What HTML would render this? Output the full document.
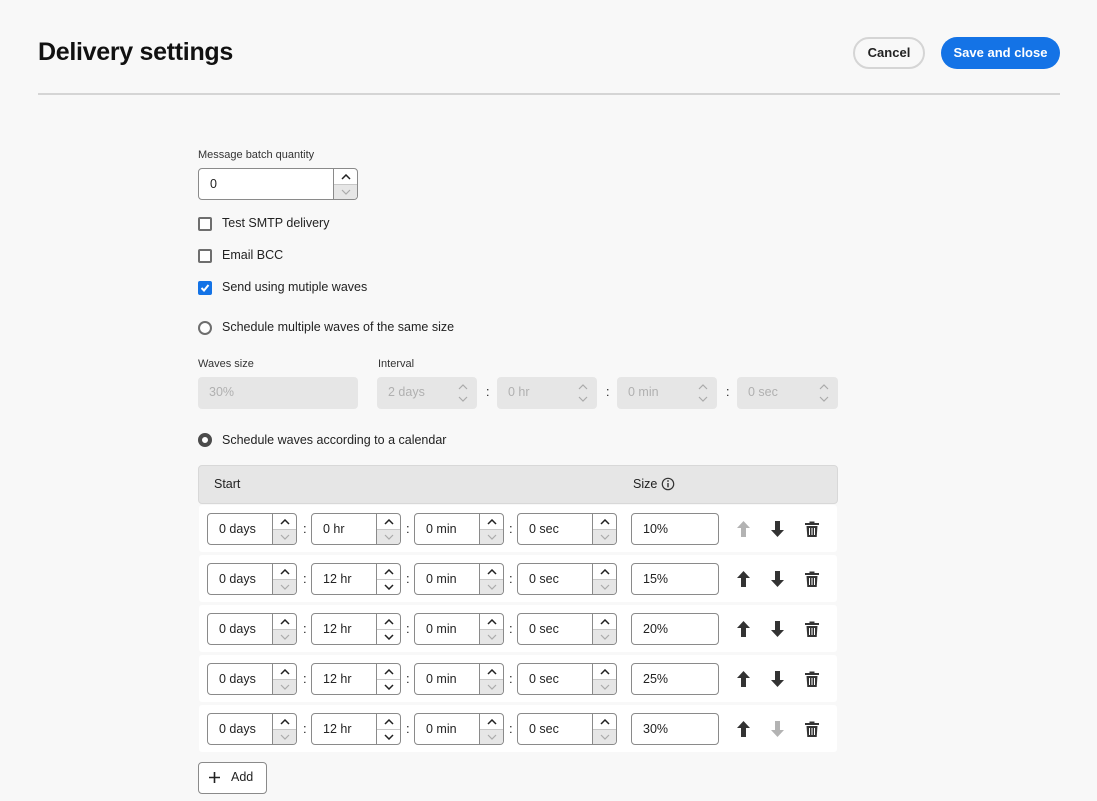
<!DOCTYPE html>
<html><head><meta charset="utf-8"><style>
*{box-sizing:border-box}
body{margin:0;width:1097px;height:801px;background:#f8f8f8;font-family:"Liberation Sans",sans-serif;color:#222;position:relative;overflow:hidden}
.a{position:absolute}
h1{position:absolute;left:38px;top:38px;margin:0;font-size:25px;font-weight:bold;color:#111;letter-spacing:-0.3px}
.btn{position:absolute;height:32px;border-radius:16px;font-size:13px;font-weight:bold;text-align:center;line-height:28px}
.lbl{position:absolute;font-size:11px;color:#333}
.t{position:absolute;font-size:12.5px;color:#222}
.cb{position:absolute;width:14px;height:14px;border:2px solid #6e6e6e;border-radius:2px;background:#fff}
.f{position:absolute;height:32px;border:1px solid #8a8a8a;border-radius:4px;background:#fff;font-size:12.5px;overflow:hidden}
.f .v{position:absolute;left:11px;top:8px}
.f .s{position:absolute;right:0;top:0;bottom:0;width:24px;border-left:1px solid #8a8a8a}
.s .u{height:15px;display:flex;align-items:center;justify-content:center}
.s .d{height:15px;border-top:1px solid #c8c8c8;display:flex;align-items:center;justify-content:center}
.s .d.x{background:#e6e6e6}
.g{position:absolute;height:32px;border-radius:4px;background:#e6e6e6;font-size:12.5px;color:#b0b0b0}
.g .v{position:absolute;left:11px;top:8px}
.g svg{position:absolute;right:9px}
.row{position:absolute;left:199px;width:638px;height:47px;background:#fff;border-radius:3px}
.c{position:absolute;font-size:13px;top:16px}
.ic{position:absolute;top:16px}
</style></head><body>
<h1>Delivery settings</h1>
<div class="btn" style="left:853px;top:37px;width:72px;border:2px solid #d5d5d5;color:#222;background:#f8f8f8">Cancel</div>
<div class="btn" style="left:941px;top:37px;width:119px;background:#1473e6;color:#fff;line-height:32px">Save and close</div>
<div class="a" style="left:38px;top:93px;width:1022px;height:2px;background:#d5d5d5"></div>

<div class="lbl" style="left:198px;top:149px">Message batch quantity</div>
<div class="f" style="left:198px;top:168px;width:160px"><span class="v">0</span><div class="s"><div class="u"><svg width="10" height="6"><polyline points="1,5 5,1 9,5" fill="none" stroke="#222" stroke-width="1.5"/></svg></div><div class="d x"><svg width="10" height="6"><polyline points="1,1 5,5 9,1" fill="none" stroke="#aaa" stroke-width="1.2"/></svg></div></div></div>

<div class="cb" style="left:198px;top:217px"></div><div class="t" style="left:222px;top:216px">Test SMTP delivery</div>
<div class="cb" style="left:198px;top:249px"></div><div class="t" style="left:222px;top:248px">Email BCC</div>
<div class="cb" style="left:198px;top:281px;background:#1473e6;border-color:#1473e6"><svg class="a" style="left:0;top:0" width="10" height="10"><polyline points="1.5,5 4,7.5 8.5,2" fill="none" stroke="#fff" stroke-width="2"/></svg></div><div class="t" style="left:222px;top:280px">Send using mutiple waves</div>

<div class="a" style="left:198px;top:321px;width:14px;height:14px;border:2px solid #6e6e6e;border-radius:50%;background:#fff"></div><div class="t" style="left:222px;top:320px">Schedule multiple waves of the same size</div>

<div class="lbl" style="left:198px;top:358px">Waves size</div>
<div class="lbl" style="left:378px;top:358px">Interval</div>
<div class="g" style="left:198px;top:377px;width:160px"><span class="v">30%</span></div>
<div class="g" style="left:377px;top:377px;width:100px"><span class="v">2 days</span><svg style="top:6px" width="10" height="20"><polyline points="1,6 5,2 9,6" fill="none" stroke="#aaa" stroke-width="1.2"/><polyline points="1,14 5,18 9,14" fill="none" stroke="#aaa" stroke-width="1.2"/></svg></div>
<div class="t" style="left:486px;top:385px">:</div>
<div class="g" style="left:497px;top:377px;width:100px"><span class="v">0 hr</span><svg style="top:6px" width="10" height="20"><polyline points="1,6 5,2 9,6" fill="none" stroke="#aaa" stroke-width="1.2"/><polyline points="1,14 5,18 9,14" fill="none" stroke="#aaa" stroke-width="1.2"/></svg></div>
<div class="t" style="left:606px;top:385px">:</div>
<div class="g" style="left:617px;top:377px;width:100px"><span class="v">0 min</span><svg style="top:6px" width="10" height="20"><polyline points="1,6 5,2 9,6" fill="none" stroke="#aaa" stroke-width="1.2"/><polyline points="1,14 5,18 9,14" fill="none" stroke="#aaa" stroke-width="1.2"/></svg></div>
<div class="t" style="left:726px;top:385px">:</div>
<div class="g" style="left:737px;top:377px;width:101px"><span class="v">0 sec</span><svg style="top:6px" width="10" height="20"><polyline points="1,6 5,2 9,6" fill="none" stroke="#aaa" stroke-width="1.2"/><polyline points="1,14 5,18 9,14" fill="none" stroke="#aaa" stroke-width="1.2"/></svg></div>

<div class="a" style="left:198px;top:433px;width:14px;height:14px;border:4px solid #4b4b4b;border-radius:50%;background:#fff"></div><div class="t" style="left:222px;top:433px">Schedule waves according to a calendar</div>

<div class="a" style="left:198px;top:465px;width:640px;height:39px;background:#e6e6e6;border:1px solid #d8d8d8;border-radius:4px"></div>
<div class="t" style="left:214px;top:477px">Start</div>
<div class="t" style="left:633px;top:477px">Size</div>
<svg class="a" style="left:661px;top:477px" width="14" height="14"><circle cx="7" cy="7" r="5.7" fill="none" stroke="#333" stroke-width="1.2"/><rect x="6.3" y="6" width="1.4" height="4.3" fill="#333"/><circle cx="7" cy="4" r="0.9" fill="#333"/></svg>

<div class="row" style="top:505px">
<div class="f" style="left:8px;top:8px;width:90px"><span class="v">0 days</span><div class="s"><div class="u"><svg width="10" height="6"><polyline points="1,5 5,1 9,5" fill="none" stroke="#222" stroke-width="1.5"/></svg></div><div class="d x"><svg width="10" height="6"><polyline points="1,1 5,5 9,1" fill="none" stroke="#aaa" stroke-width="1.2"/></svg></div></div></div>
<span class="c" style="left:104px">:</span>
<div class="f" style="left:112px;top:8px;width:90px"><span class="v">0 hr</span><div class="s"><div class="u"><svg width="10" height="6"><polyline points="1,5 5,1 9,5" fill="none" stroke="#222" stroke-width="1.5"/></svg></div><div class="d x"><svg width="10" height="6"><polyline points="1,1 5,5 9,1" fill="none" stroke="#aaa" stroke-width="1.2"/></svg></div></div></div>
<span class="c" style="left:207px">:</span>
<div class="f" style="left:215px;top:8px;width:90px"><span class="v">0 min</span><div class="s"><div class="u"><svg width="10" height="6"><polyline points="1,5 5,1 9,5" fill="none" stroke="#222" stroke-width="1.5"/></svg></div><div class="d x"><svg width="10" height="6"><polyline points="1,1 5,5 9,1" fill="none" stroke="#aaa" stroke-width="1.2"/></svg></div></div></div>
<span class="c" style="left:310px">:</span>
<div class="f" style="left:318px;top:8px;width:100px"><span class="v">0 sec</span><div class="s"><div class="u"><svg width="10" height="6"><polyline points="1,5 5,1 9,5" fill="none" stroke="#222" stroke-width="1.5"/></svg></div><div class="d x"><svg width="10" height="6"><polyline points="1,1 5,5 9,1" fill="none" stroke="#aaa" stroke-width="1.2"/></svg></div></div></div>
<div class="f" style="left:432px;top:8px;width:88px"><span class="v">10%</span></div>
<svg class="ic" style="left:538px" width="13" height="16"><path d="M6.5 0 L13 7 H9 V16 H4 V7 H0 Z" fill="#b3b3b3"/></svg>
<svg class="ic" style="left:572px" width="13" height="16"><path d="M6.5 16 L13 9 H9 V0 H4 V9 H0 Z" fill="#333"/></svg>
<svg class="ic" style="left:606px" width="14" height="16"><path d="M4.5 0.5 H9.5 V2 H14 V4 H0 V2 H4.5 Z M1.5 5 H12.5 L11.7 16 H2.3 Z" fill="#333"/><path d="M4.5 7 V14 M7 7 V14 M9.5 7 V14" stroke="#fff" stroke-width="1"/></svg>
</div>

<div class="row" style="top:555px">
<div class="f" style="left:8px;top:8px;width:90px"><span class="v">0 days</span><div class="s"><div class="u"><svg width="10" height="6"><polyline points="1,5 5,1 9,5" fill="none" stroke="#222" stroke-width="1.5"/></svg></div><div class="d x"><svg width="10" height="6"><polyline points="1,1 5,5 9,1" fill="none" stroke="#aaa" stroke-width="1.2"/></svg></div></div></div>
<span class="c" style="left:104px">:</span>
<div class="f" style="left:112px;top:8px;width:90px"><span class="v">12 hr</span><div class="s"><div class="u"><svg width="10" height="6"><polyline points="1,5 5,1 9,5" fill="none" stroke="#222" stroke-width="1.5"/></svg></div><div class="d"><svg width="10" height="6"><polyline points="1,1 5,5 9,1" fill="none" stroke="#222" stroke-width="1.5"/></svg></div></div></div>
<span class="c" style="left:207px">:</span>
<div class="f" style="left:215px;top:8px;width:90px"><span class="v">0 min</span><div class="s"><div class="u"><svg width="10" height="6"><polyline points="1,5 5,1 9,5" fill="none" stroke="#222" stroke-width="1.5"/></svg></div><div class="d x"><svg width="10" height="6"><polyline points="1,1 5,5 9,1" fill="none" stroke="#aaa" stroke-width="1.2"/></svg></div></div></div>
<span class="c" style="left:310px">:</span>
<div class="f" style="left:318px;top:8px;width:100px"><span class="v">0 sec</span><div class="s"><div class="u"><svg width="10" height="6"><polyline points="1,5 5,1 9,5" fill="none" stroke="#222" stroke-width="1.5"/></svg></div><div class="d x"><svg width="10" height="6"><polyline points="1,1 5,5 9,1" fill="none" stroke="#aaa" stroke-width="1.2"/></svg></div></div></div>
<div class="f" style="left:432px;top:8px;width:88px"><span class="v">15%</span></div>
<svg class="ic" style="left:538px" width="13" height="16"><path d="M6.5 0 L13 7 H9 V16 H4 V7 H0 Z" fill="#333"/></svg>
<svg class="ic" style="left:572px" width="13" height="16"><path d="M6.5 16 L13 9 H9 V0 H4 V9 H0 Z" fill="#333"/></svg>
<svg class="ic" style="left:606px" width="14" height="16"><path d="M4.5 0.5 H9.5 V2 H14 V4 H0 V2 H4.5 Z M1.5 5 H12.5 L11.7 16 H2.3 Z" fill="#333"/><path d="M4.5 7 V14 M7 7 V14 M9.5 7 V14" stroke="#fff" stroke-width="1"/></svg>
</div>

<div class="row" style="top:605px">
<div class="f" style="left:8px;top:8px;width:90px"><span class="v">0 days</span><div class="s"><div class="u"><svg width="10" height="6"><polyline points="1,5 5,1 9,5" fill="none" stroke="#222" stroke-width="1.5"/></svg></div><div class="d x"><svg width="10" height="6"><polyline points="1,1 5,5 9,1" fill="none" stroke="#aaa" stroke-width="1.2"/></svg></div></div></div>
<span class="c" style="left:104px">:</span>
<div class="f" style="left:112px;top:8px;width:90px"><span class="v">12 hr</span><div class="s"><div class="u"><svg width="10" height="6"><polyline points="1,5 5,1 9,5" fill="none" stroke="#222" stroke-width="1.5"/></svg></div><div class="d"><svg width="10" height="6"><polyline points="1,1 5,5 9,1" fill="none" stroke="#222" stroke-width="1.5"/></svg></div></div></div>
<span class="c" style="left:207px">:</span>
<div class="f" style="left:215px;top:8px;width:90px"><span class="v">0 min</span><div class="s"><div class="u"><svg width="10" height="6"><polyline points="1,5 5,1 9,5" fill="none" stroke="#222" stroke-width="1.5"/></svg></div><div class="d x"><svg width="10" height="6"><polyline points="1,1 5,5 9,1" fill="none" stroke="#aaa" stroke-width="1.2"/></svg></div></div></div>
<span class="c" style="left:310px">:</span>
<div class="f" style="left:318px;top:8px;width:100px"><span class="v">0 sec</span><div class="s"><div class="u"><svg width="10" height="6"><polyline points="1,5 5,1 9,5" fill="none" stroke="#222" stroke-width="1.5"/></svg></div><div class="d x"><svg width="10" height="6"><polyline points="1,1 5,5 9,1" fill="none" stroke="#aaa" stroke-width="1.2"/></svg></div></div></div>
<div class="f" style="left:432px;top:8px;width:88px"><span class="v">20%</span></div>
<svg class="ic" style="left:538px" width="13" height="16"><path d="M6.5 0 L13 7 H9 V16 H4 V7 H0 Z" fill="#333"/></svg>
<svg class="ic" style="left:572px" width="13" height="16"><path d="M6.5 16 L13 9 H9 V0 H4 V9 H0 Z" fill="#333"/></svg>
<svg class="ic" style="left:606px" width="14" height="16"><path d="M4.5 0.5 H9.5 V2 H14 V4 H0 V2 H4.5 Z M1.5 5 H12.5 L11.7 16 H2.3 Z" fill="#333"/><path d="M4.5 7 V14 M7 7 V14 M9.5 7 V14" stroke="#fff" stroke-width="1"/></svg>
</div>

<div class="row" style="top:655px">
<div class="f" style="left:8px;top:8px;width:90px"><span class="v">0 days</span><div class="s"><div class="u"><svg width="10" height="6"><polyline points="1,5 5,1 9,5" fill="none" stroke="#222" stroke-width="1.5"/></svg></div><div class="d x"><svg width="10" height="6"><polyline points="1,1 5,5 9,1" fill="none" stroke="#aaa" stroke-width="1.2"/></svg></div></div></div>
<span class="c" style="left:104px">:</span>
<div class="f" style="left:112px;top:8px;width:90px"><span class="v">12 hr</span><div class="s"><div class="u"><svg width="10" height="6"><polyline points="1,5 5,1 9,5" fill="none" stroke="#222" stroke-width="1.5"/></svg></div><div class="d"><svg width="10" height="6"><polyline points="1,1 5,5 9,1" fill="none" stroke="#222" stroke-width="1.5"/></svg></div></div></div>
<span class="c" style="left:207px">:</span>
<div class="f" style="left:215px;top:8px;width:90px"><span class="v">0 min</span><div class="s"><div class="u"><svg width="10" height="6"><polyline points="1,5 5,1 9,5" fill="none" stroke="#222" stroke-width="1.5"/></svg></div><div class="d x"><svg width="10" height="6"><polyline points="1,1 5,5 9,1" fill="none" stroke="#aaa" stroke-width="1.2"/></svg></div></div></div>
<span class="c" style="left:310px">:</span>
<div class="f" style="left:318px;top:8px;width:100px"><span class="v">0 sec</span><div class="s"><div class="u"><svg width="10" height="6"><polyline points="1,5 5,1 9,5" fill="none" stroke="#222" stroke-width="1.5"/></svg></div><div class="d x"><svg width="10" height="6"><polyline points="1,1 5,5 9,1" fill="none" stroke="#aaa" stroke-width="1.2"/></svg></div></div></div>
<div class="f" style="left:432px;top:8px;width:88px"><span class="v">25%</span></div>
<svg class="ic" style="left:538px" width="13" height="16"><path d="M6.5 0 L13 7 H9 V16 H4 V7 H0 Z" fill="#333"/></svg>
<svg class="ic" style="left:572px" width="13" height="16"><path d="M6.5 16 L13 9 H9 V0 H4 V9 H0 Z" fill="#333"/></svg>
<svg class="ic" style="left:606px" width="14" height="16"><path d="M4.5 0.5 H9.5 V2 H14 V4 H0 V2 H4.5 Z M1.5 5 H12.5 L11.7 16 H2.3 Z" fill="#333"/><path d="M4.5 7 V14 M7 7 V14 M9.5 7 V14" stroke="#fff" stroke-width="1"/></svg>
</div>

<div class="row" style="top:705px">
<div class="f" style="left:8px;top:8px;width:90px"><span class="v">0 days</span><div class="s"><div class="u"><svg width="10" height="6"><polyline points="1,5 5,1 9,5" fill="none" stroke="#222" stroke-width="1.5"/></svg></div><div class="d x"><svg width="10" height="6"><polyline points="1,1 5,5 9,1" fill="none" stroke="#aaa" stroke-width="1.2"/></svg></div></div></div>
<span class="c" style="left:104px">:</span>
<div class="f" style="left:112px;top:8px;width:90px"><span class="v">12 hr</span><div class="s"><div class="u"><svg width="10" height="6"><polyline points="1,5 5,1 9,5" fill="none" stroke="#222" stroke-width="1.5"/></svg></div><div class="d"><svg width="10" height="6"><polyline points="1,1 5,5 9,1" fill="none" stroke="#222" stroke-width="1.5"/></svg></div></div></div>
<span class="c" style="left:207px">:</span>
<div class="f" style="left:215px;top:8px;width:90px"><span class="v">0 min</span><div class="s"><div class="u"><svg width="10" height="6"><polyline points="1,5 5,1 9,5" fill="none" stroke="#222" stroke-width="1.5"/></svg></div><div class="d x"><svg width="10" height="6"><polyline points="1,1 5,5 9,1" fill="none" stroke="#aaa" stroke-width="1.2"/></svg></div></div></div>
<span class="c" style="left:310px">:</span>
<div class="f" style="left:318px;top:8px;width:100px"><span class="v">0 sec</span><div class="s"><div class="u"><svg width="10" height="6"><polyline points="1,5 5,1 9,5" fill="none" stroke="#222" stroke-width="1.5"/></svg></div><div class="d x"><svg width="10" height="6"><polyline points="1,1 5,5 9,1" fill="none" stroke="#aaa" stroke-width="1.2"/></svg></div></div></div>
<div class="f" style="left:432px;top:8px;width:88px"><span class="v">30%</span></div>
<svg class="ic" style="left:538px" width="13" height="16"><path d="M6.5 0 L13 7 H9 V16 H4 V7 H0 Z" fill="#333"/></svg>
<svg class="ic" style="left:572px" width="13" height="16"><path d="M6.5 16 L13 9 H9 V0 H4 V9 H0 Z" fill="#b3b3b3"/></svg>
<svg class="ic" style="left:606px" width="14" height="16"><path d="M4.5 0.5 H9.5 V2 H14 V4 H0 V2 H4.5 Z M1.5 5 H12.5 L11.7 16 H2.3 Z" fill="#333"/><path d="M4.5 7 V14 M7 7 V14 M9.5 7 V14" stroke="#fff" stroke-width="1"/></svg>
</div>

<div class="a" style="left:198px;top:762px;width:69px;height:32px;border:1px solid #8a8a8a;border-radius:4px;background:#fff"></div>
<svg class="a" style="left:208px;top:771px" width="13" height="13"><path d="M6.5 1 V12 M1 6.5 H12" stroke="#222" stroke-width="1.6"/></svg>
<div class="t" style="left:231px;top:770px">Add</div>
</body></html>
